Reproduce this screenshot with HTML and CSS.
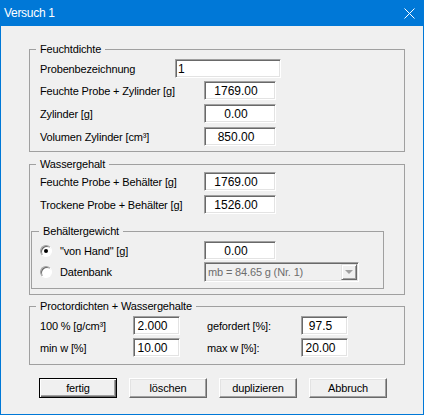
FILE: index.html
```html
<!DOCTYPE html>
<html lang="de">

<head>
    <meta charset="UTF-8">
    <meta name="viewport" content="width=device-width, initial-scale=1.0">
    <title>Versuch 1</title>
    <link rel="stylesheet" href="styles.css">
</head>

<body>
    <div class="window">
        <div class="titlebar">
            <span class="title">Versuch 1</span>
            <svg class="close" width="11" height="11" viewBox="0 0 11 11">
                <path d="M0.5 0.5 L10.5 10.5 M10.5 0.5 L0.5 10.5" stroke="#fff" stroke-width="1" fill="none" />
            </svg>
        </div>

        <div class="client">
            <fieldset class="group g1">
                <legend>Feuchtdichte</legend>
                <div class="row">
                    <label class="lbl short">Probenbezeichnung</label>
                    <input class="edit name" type="text" value="1">
                </div>
                <div class="row r3">
                    <label class="lbl">Feuchte Probe + Zylinder [g]</label>
                    <input class="edit num" type="text" value="1769.00">
                </div>
                <div class="row">
                    <label class="lbl">Zylinder [g]</label>
                    <input class="edit num" type="text" value="0.00">
                </div>
                <div class="row">
                    <label class="lbl">Volumen Zylinder [cm³]</label>
                    <input class="edit num" type="text" value="850.00">
                </div>
            </fieldset>

            <fieldset class="group g2">
                <legend>Wassergehalt</legend>
                <div class="row">
                    <label class="lbl">Feuchte Probe + Behälter [g]</label>
                    <input class="edit num" type="text" value="1769.00">
                </div>
                <div class="row">
                    <label class="lbl">Trockene Probe + Behälter [g]</label>
                    <input class="edit num" type="text" value="1526.00">
                </div>

                <fieldset class="group inner">
                    <legend>Behältergewicht</legend>
                    <div class="row opt">
                        <span class="radio on"></span>
                        <label class="lbl radio-lbl">&quot;von Hand&quot; [g]</label>
                        <input class="edit num" type="text" value="0.00">
                    </div>
                    <div class="row opt r2 tall">
                        <span class="radio"></span>
                        <label class="lbl radio-lbl">Datenbank</label>
                        <div class="combo">
                            <span>mb = 84.65 g (Nr. 1)</span>
                            <span class="combo-btn"><span class="arrow"></span></span>
                        </div>
                    </div>
                </fieldset>
            </fieldset>

            <fieldset class="group g3">
                <legend>Proctordichten + Wassergehalte</legend>
                <div class="row">
                    <label class="lbl pl">100 % [g/cm³]</label>
                    <input class="edit small" type="text" value="2.000">
                    <label class="lbl pr">gefordert [%]:</label>
                    <input class="edit small" type="text" value="97.5">
                </div>
                <div class="row r3">
                    <label class="lbl pl">min w [%]</label>
                    <input class="edit small" type="text" value="10.00">
                    <label class="lbl pr">max w [%]:</label>
                    <input class="edit small" type="text" value="20.00">
                </div>
            </fieldset>

            <div class="buttons">
                <button class="btn default">fertig</button>
                <button class="btn">löschen</button>
                <button class="btn">duplizieren</button>
                <button class="btn">Abbruch</button>
            </div>
        </div>
    </div>
</body>

</html>
```

FILE: styles.css
```css
* {
    box-sizing: border-box;
}

body {
    margin: 0;
    font-family: "Liberation Sans", Arial, sans-serif;
    font-size: 11px;
    letter-spacing: -0.15px;
    color: #000;
}

.window {
    width: 424px;
    height: 415px;
    border: 1px solid #0078d7;
    background: #f0f0f0;
}

.titlebar {
    height: 25px;
    background: #0078d7;
    color: #fff;
    display: flex;
    align-items: center;
    justify-content: space-between;
    padding: 0 8px 1px 3px;
}

.title {
    font-size: 12px;
    letter-spacing: -0.3px;
}

.close {
    display: block;
}

.client {
    padding: 17px 0 0 28px;
}

/* group boxes */

.group {
    margin: 0;
    padding: 0;
    border: 1px solid #a0a0a0;
    min-width: 0;
    width: 376px;
}

.group legend {
    padding: 0 4px;
    margin-left: 6px;
    line-height: 13px;
    height: 13px;
}

.g1 {
    padding: 3px 0 5px 0;
}

.g2 {
    margin-top: 6px;
    padding: 1px 0 5px 0;
}

.inner {
    width: 353px;
    margin: 11px 0 0 1px;
    padding: 3px 0 6px 0;
}

.inner legend {
    margin-left: 7px;
}

.g3 {
    margin-top: 5px;
    padding: 3px 0 7px 0;
}

/* rows */

.row {
    display: flex;
    align-items: center;
    height: 19px;
    margin: 4px 0 0 10px;
}

.group legend + .row {
    margin-top: 0;
}

.row.r3 {
    margin-top: 3px;
}

.row.r2 {
    margin-top: 2px;
}

.row.tall {
    height: 20px;
}

.row.opt {
    margin-left: 8px;
}

.lbl {
    flex-shrink: 0;
    white-space: nowrap;
    width: 164px;
}

.lbl.short {
    width: 135px;
}

.radio-lbl {
    width: 144px;
}

.lbl.pl {
    width: 93px;
}

.lbl.pr {
    width: 94px;
    margin-left: 27px;
}

/* edit fields */

.edit {
    flex-shrink: 0;
    height: 19px;
    margin: 0;
    padding: 0 8px 0 0;
    font-family: "Liberation Sans", Arial, sans-serif;
    font-size: 12px;
    color: #000;
    text-align: center;
    background: #fff;
    border: 1px solid;
    border-color: #a0a0a0 #fff #fff #a0a0a0;
    box-shadow: inset 1px 1px #696969, inset -1px -1px #e3e3e3;
    outline: none;
}

.edit.num {
    width: 72px;
}

.edit.name {
    width: 106px;
    text-align: left;
    padding: 0 0 0 2px;
}

.edit.small {
    width: 47px;
}

/* radio buttons */

.radio {
    flex-shrink: 0;
    position: relative;
    width: 12px;
    height: 12px;
    margin-right: 8px;
    border-radius: 50%;
    background: #fff;
    border: 1px solid;
    border-color: #a0a0a0 #fff #fff #a0a0a0;
    box-shadow: inset 1px 1px #696969;
}

.radio.on::after {
    content: "";
    position: absolute;
    left: 3px;
    top: 3px;
    width: 4px;
    height: 4px;
    border-radius: 50%;
    background: #000;
}

/* disabled combo box */

.combo {
    width: 155px;
    height: 20px;
    display: flex;
    align-items: center;
    justify-content: space-between;
    padding: 0 1px 0 3px;
    color: #6d6d6d;
    background: #f0f0f0;
    border: 1px solid;
    border-color: #a0a0a0 #fff #fff #a0a0a0;
    box-shadow: inset 1px 1px #696969, inset -1px -1px #e3e3e3;
}

.combo-btn {
    width: 16px;
    height: 16px;
    display: flex;
    align-items: center;
    justify-content: center;
    background: #f0f0f0;
    border: 1px solid;
    border-color: #e3e3e3 #696969 #696969 #e3e3e3;
    box-shadow: inset 1px 1px #fff, inset -1px -1px #a0a0a0;
}

.arrow {
    width: 0;
    height: 0;
    border-left: 4px solid transparent;
    border-right: 4px solid transparent;
    border-top: 4px solid #a0a0a0;
}

/* buttons */

.buttons {
    display: flex;
    gap: 12px;
    margin: 13px 0 0 10px;
}

.btn {
    width: 78px;
    height: 20px;
    padding: 0;
    font-family: "Liberation Sans", Arial, sans-serif;
    font-size: 11px;
    letter-spacing: -0.15px;
    color: #000;
    background: #f0f0f0;
    border: 1px solid;
    border-color: #fff #696969 #696969 #fff;
    box-shadow: inset -1px -1px #a0a0a0, inset 1px 1px #e3e3e3;
}

.btn.default {
    border-color: #000;
    box-shadow: inset 1px 1px #fff, inset -1px -1px #696969, inset -2px -2px #a0a0a0;
}
```
